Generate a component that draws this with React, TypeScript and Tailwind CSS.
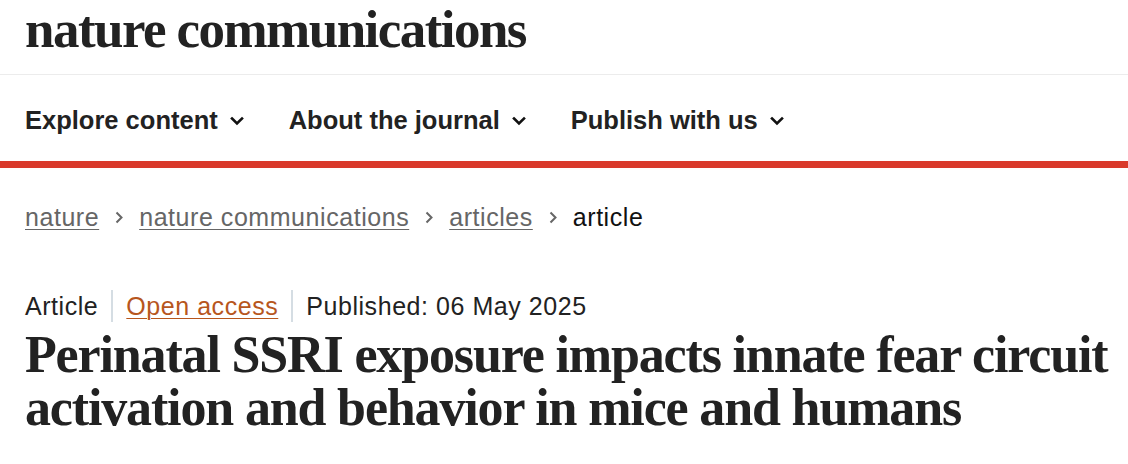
import React from "react";

function Chevron() {
  return (
    <svg width="14" height="10" viewBox="0 0 14 10" className="ml-[12px] mt-[2px]" fill="none">
      <path d="M2 2.5 L7 7.5 L12 2.5" stroke="#111" strokeWidth="2.6" strokeLinecap="square" />
    </svg>
  );
}

function Crumb() {
  return (
    <svg width="10" height="15" viewBox="0 0 10 15" className="mx-[15px]" fill="none">
      <path d="M2.5 2.5 L7.5 7.5 L2.5 12.5" stroke="#666" strokeWidth="2" />
    </svg>
  );
}

export default function App() {
  const sans = { fontFamily: '"Liberation Sans", Arial, sans-serif' };
  const serif = { fontFamily: '"Liberation Serif", "Times New Roman", serif' };
  return (
    <div className="w-[1128px] h-[464px] bg-white overflow-hidden">
      <div className="h-[75px] border-b border-[#ececec] pl-[25px] flex items-start">
        <div className="text-[53px] font-bold leading-[59px] tracking-[-1.55px] text-[#222]" style={serif}>
          nature communications
        </div>
      </div>
      <nav className="h-[86px] pl-[25px] pt-[4px] flex items-center gap-[45px] text-[25.5px] font-bold text-[#222]" style={sans}>
        <div className="flex items-center">Explore content<Chevron /></div>
        <div className="flex items-center">About the journal<Chevron /></div>
        <div className="flex items-center">Publish with us<Chevron /></div>
      </nav>
      <div className="h-[7px] bg-[#d9392b]" />
      <div className="pl-[25px] pt-[37px] flex items-center text-[25px] tracking-[0.55px] leading-none" style={sans}>
        <span className="underline underline-offset-[3px] decoration-1 text-[#666]">nature</span>
        <Crumb />
        <span className="underline underline-offset-[3px] decoration-1 text-[#666]">nature communications</span>
        <Crumb />
        <span className="underline underline-offset-[3px] decoration-1 text-[#666]">articles</span>
        <Crumb />
        <span className="text-[#111]">article</span>
      </div>
      <div className="pl-[25px] mt-[60px] flex items-center text-[25px] tracking-[0.55px] leading-none text-[#222]" style={sans}>
        <span>Article</span>
        <span className="w-[2px] h-[32px] bg-[#d5dde3] mx-[13px]" />
        <span className="text-[#b7561d] underline underline-offset-[3px] decoration-1">Open access</span>
        <span className="w-[2px] h-[32px] bg-[#d5dde3] mx-[13px]" />
        <span>Published: 06 May 2025</span>
      </div>
      <h1 className="pl-[25px] mt-[6px] text-[52px] leading-[53px] font-bold tracking-[-1.15px] text-[#222]" style={serif}>
        Perinatal SSRI exposure impacts innate fear circuit<br />activation and behavior in mice and humans
      </h1>
    </div>
  );
}
